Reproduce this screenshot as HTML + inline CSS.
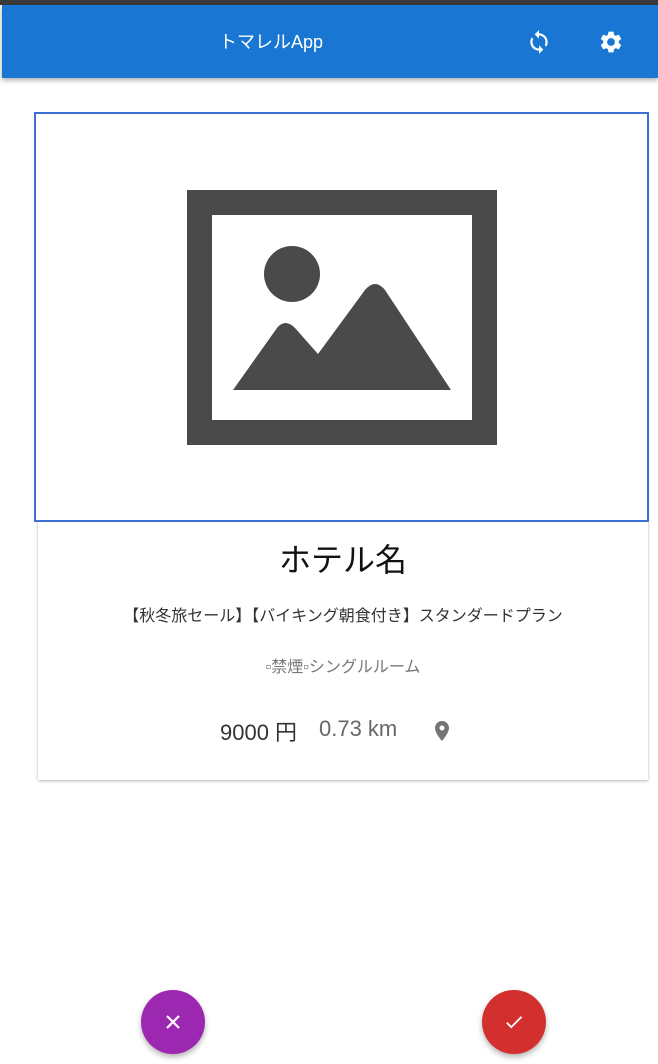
<!DOCTYPE html>
<html><head><meta charset="utf-8"><style>
*{margin:0;padding:0;box-sizing:border-box}
body{width:658px;height:1064px;background:#fff;position:relative;overflow:hidden;font-family:"Liberation Sans","Noto Sans CJK JP",sans-serif}
.top{position:absolute;left:0;top:0;width:658px;height:5px;background:#3a3a3a}
.bar{position:absolute;left:2px;top:5px;width:656px;height:73px;background:#1976d2;box-shadow:0 2px 5px rgba(0,0,0,.35)}
.title{position:absolute;left:0;width:538px;top:23px;text-align:center;color:#fff;font-size:18px}
.card{position:absolute;left:38px;top:120px;width:610px;height:660px;background:#fff;box-shadow:0 1px 3px rgba(0,0,0,.3)}
.img{position:absolute;left:34px;top:112px;width:615px;height:410px;border:2px solid #3c6fd4;background:#fff}
.t{position:absolute;left:38px;width:610px;text-align:center}
.fab{position:absolute;width:64px;height:64px;border-radius:50%;top:990px;box-shadow:0 3px 6px rgba(0,0,0,.3)}
</style></head><body>
<div class="top"></div>
<div class="bar"><div class="title">トマレルApp</div>
<svg style="position:absolute;left:524px;top:24px" width="26" height="26" viewBox="0 0 24 24"><path fill="#fff" d="M12 4V1L8 5l4 4V6c3.31 0 6 2.69 6 6 0 1.01-.25 1.97-.7 2.8l1.46 1.46C19.54 15.03 20 13.57 20 12c0-4.42-3.58-8-8-8zm0 14c-3.31 0-6-2.69-6-6 0-1.01.25-1.97.7-2.8L5.24 7.74C4.46 8.97 4 10.43 4 12c0 4.42 3.58 8 8 8v3l4-4-4-4v3z"/></svg>
<svg style="position:absolute;left:596px;top:24px" width="26" height="26" viewBox="0 0 24 24"><path fill="#fff" d="M19.14 12.94c.04-.3.06-.61.06-.94 0-.32-.02-.64-.07-.94l2.030-1.58a.49.49 0 0 0 .12-.61l-1.92-3.32a.49.49 0 0 0-.59-.22l-2.39.96c-.5-.38-1.03-.7-1.62-.94l-.36-2.54a.48.48 0 0 0-.48-.41h-3.84c-.24 0-.43.17-.47.41l-.36 2.54c-.59.24-1.13.57-1.62.94l-2.39-.96a.48.48 0 0 0-.59.22L2.74 8.87c-.12.21-.08.47.12.61l2.03 1.58c-.05.3-.09.63-.09.94s.02.64.07.94l-2.03 1.58a.49.49 0 0 0-.12.61l1.92 3.32c.12.22.37.29.59.22l2.39-.96c.5.38 1.03.7 1.62.94l.36 2.54c.05.24.24.41.48.41h3.84c.24 0 .44-.17.47-.41l.36-2.54c.59-.24 1.13-.56 1.62-.94l2.39.96c.22.08.47 0 .59-.22l1.92-3.32c.12-.22.07-.47-.12-.61l-2.01-1.58zM12 15.6A3.6 3.6 0 1 1 12 8.4a3.6 3.6 0 0 1 0 7.2z"/></svg>
</div>
<div class="card"></div>
<div class="img">
<svg style="position:absolute;left:151px;top:76px" width="310" height="255" viewBox="0 0 310 255">
<rect x="0" y="0" width="310" height="255" fill="#4a4a4a"/>
<rect x="25" y="25" width="260" height="205" fill="#fff"/>
<circle cx="105" cy="84" r="28" fill="#4a4a4a"/>
<path d="M46 200 L90 138 Q98 128 108 138 L131 164 L178 100 Q188 88 198 100 L264 200 Z" fill="#4a4a4a"/>
</svg></div>
<div class="t" style="top:535px;font-size:32px;color:#111">ホテル名</div>
<div class="t" style="top:602px;font-size:16px;color:#333">【秋冬旅セール】【バイキング朝食付き】スタンダードプラン</div>
<div class="t" style="top:653px;font-size:16px;color:#777">▫禁煙▫シングルルーム</div>
<div style="position:absolute;left:220px;top:715px;font-size:22px;color:#333">9000 円</div>
<div style="position:absolute;left:319px;top:716px;font-size:22px;color:#666">0.73 km</div>
<svg style="position:absolute;left:430px;top:719px" width="24" height="24" viewBox="0 0 24 24"><path fill="#757575" d="M12 2C8.1 2 5 5.1 5 9c0 5.2 7 13 7 13s7-7.8 7-13c0-3.9-3.1-7-7-7zm0 9.5a2.5 2.5 0 1 1 0-5 2.5 2.5 0 0 1 0 5z"/></svg>
<div class="fab" style="left:141px;background:#9c27b0"><svg style="position:absolute;left:22px;top:22px" width="20" height="20" viewBox="0 0 20 20"><path d="M4 4L16 16M16 4L4 16" stroke="#fff" stroke-width="2.2"/></svg></div>
<div class="fab" style="left:482px;background:#d32f2f"><svg style="position:absolute;left:21px;top:21px" width="22" height="22" viewBox="0 0 24 24"><path fill="#fff" d="M9 16.2L4.8 12l-1.4 1.4L9 19 21 7l-1.4-1.4z"/></svg></div>
</body></html>
